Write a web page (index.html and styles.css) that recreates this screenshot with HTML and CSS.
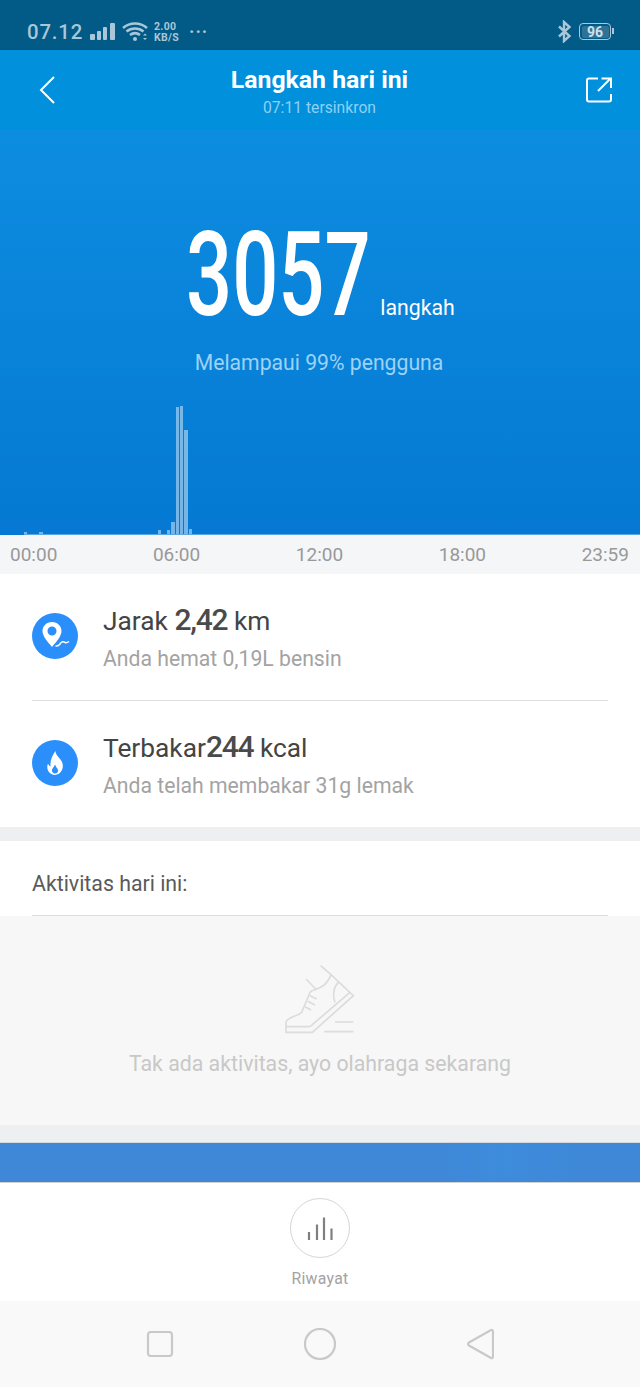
FILE: index.html
```html
<!DOCTYPE html>
<html lang="en">
<head>
    <meta charset="UTF-8">
    <meta name="viewport" content="width=device-width, initial-scale=1.0">
    <title>Langkah hari ini</title>
    <link rel="stylesheet" href="styles.css">
</head>
<body>
    <div class="status-bar">
        <div class="status-left">
            <span class="clock">07.12</span>
            <svg class="signal" width="27" height="17" viewBox="0 0 27 17"><rect x="0" y="11" width="5" height="6" rx="1"/><rect x="7" y="8" width="4" height="9" rx="1"/><rect x="13" y="4" width="4" height="13" rx="1"/><rect x="20" y="0" width="5" height="17" rx="1"/></svg>
            <svg class="wifi" width="26" height="20" viewBox="0 0 26 20"><path d="M1 6 C8 0 18 0 25 6" /><path d="M4.500 9.500 C9.500 5.500 16.500 5.500 21.500 9.500"/><path d="M8 13 C11 10.800 15 10.800 18 13"/><circle class="fill" cx="13" cy="17" r="2"/><path class="fill" d="M21 13.500 L23 11.500 L25 13.500 Z M21 16 L23 18 L25 16 Z"/></svg>
            <div class="speed"><span>2.00</span><span>KB/S</span></div>
            <span class="dots">&middot;&middot;&middot;</span>
        </div>
        <div class="status-right">
            <svg class="bt" width="15" height="23" viewBox="0 0 15 23"><path d="M2 6.500 L12.500 16 L7 21 L7 2 L12.500 7 L2 16.500"/></svg>
            <div class="battery"><span class="battery-level">96</span></div>
        </div>
    </div>

    <div class="nav">
        <svg class="nav-icon" width="18" height="28" viewBox="0 0 18 28"><path d="M15 1 L2 14 L15 27"/></svg>
        <div class="nav-title">
            <h1>Langkah hari ini</h1>
            <p>07:11 tersinkron</p>
        </div>
        <svg class="nav-icon" width="26" height="26" viewBox="0 0 26 26"><path d="M12 1.500 H3 Q1 1.500 1 3.500 V22.500 Q1 24.500 3 24.500 H23 Q25 24.500 25 22.500 V17"/><path d="M12 14 L24 2 M15.500 1.500 H25 V11"/></svg>
    </div>

    <div class="hero">
        <div class="count">
            <span class="count-box"><span class="count-num">3057</span></span>
            <span class="count-unit">langkah</span>
        </div>
        <p class="rank">Melampaui 99% pengguna</p>
        <div class="chart">
            <span class="bar" style="height:2px"></span>
            <span class="chart-gap"></span>
            <span class="bar" style="height:2px"></span>
            <span class="chart-space"></span>
            <span class="bar" style="height:4px"></span>
            <span class="bar" style="height:0"></span>
            <span class="bar" style="height:4px"></span>
            <span class="bar" style="height:12px"></span>
            <span class="bar" style="height:127px"></span>
            <span class="bar" style="height:128px"></span>
            <span class="bar" style="height:104px"></span>
            <span class="bar" style="height:5px"></span>
        </div>
    </div>

    <div class="axis">
        <span>00:00</span><span>06:00</span><span>12:00</span><span>18:00</span><span>23:59</span>
    </div>

    <div class="stats">
        <div class="stat stat-first">
            <div class="stat-icon">
                <svg width="32" height="32" viewBox="0 0 32 32"><path class="solid" fill-rule="evenodd" d="M13 2 C7.500 2 3.500 6 3.500 11 C3.500 16.500 9 22 13 27 C17 22 22.500 16.500 22.500 11 C22.500 6 18.500 2 13 2 Z M13 6.500 A4.500 4.500 0 1 1 13 15.500 A4.500 4.500 0 1 1 13 6.500 Z"/><path class="line" d="M16.500 26 C19 26.500 20 25.500 21 24 C22 22 24 21 26 22.500 C27.500 23 28.500 22.500 30 21.500"/></svg>
            </div>
            <div>
                <div class="stat-main">Jarak <b>2,42</b> km</div>
                <div class="stat-sub">Anda hemat 0,19L bensin</div>
            </div>
        </div>
        <div class="stat">
            <div class="stat-icon">
                <svg width="32" height="32" viewBox="0 0 32 32"><path class="solid" fill-rule="evenodd" d="M16.500 4 C17 9 20.500 10.500 22.500 14 C25.500 19 23.500 27 16 28 C9 27.500 7 21 9 16.500 C9.500 18 10.500 19 11.500 19.500 C11 14 13 8.500 16.500 4 Z M16 17.500 C15 20.500 12.500 21.500 13 24 C13.500 26 15 26.500 16 26.500 C18 26.500 19.500 25 19 23 C18.500 21 17 20.500 16 17.500 Z"/></svg>
            </div>
            <div>
                <div class="stat-main">Terbakar<b>244</b> kcal</div>
                <div class="stat-sub">Anda telah membakar 31g lemak</div>
            </div>
        </div>
    </div>

    <div class="activity">
        <div class="activity-head"><span>Aktivitas hari ini:</span></div>
    </div>
    <div class="empty">
        <svg class="shoe" width="70" height="68" viewBox="130 43 210 204"><path d="M237 45 L268 72 L335 135 L212 245 H133 V215 C133 200 170 197 180 185 L205 125 C215 112 250 120 268 72"/><path d="M133 228 H200 Q207 228 212 222 L325 125"/><path d="M193 85 L225 118"/><path d="M205 135 L225 145 M198 152 L220 163 M190 168 L208 178"/><path d="M290 95 C275 110 272 135 280 155"/><path d="M280 214 H335 M248 243 H335"/></svg>
        <p>Tak ada aktivitas, ayo olahraga sekarang</p>
    </div>

    <div class="gap"></div>
    <div class="banner"></div>

    <div class="tabbar">
        <div class="tab-circle">
            <svg width="26" height="24" viewBox="0 0 26 24"><path d="M2 24 V16 M10 24 V8.500 M17 24 V1.500 M24.500 24 V12.500"/></svg>
        </div>
        <span>Riwayat</span>
    </div>

    <div class="softkeys">
        <svg width="28" height="28" viewBox="0 0 28 28"><rect x="2" y="2" width="24" height="24" rx="3"/></svg>
        <svg width="32" height="32" viewBox="0 0 32 32"><circle cx="16" cy="16" r="15"/></svg>
        <svg width="28" height="32" viewBox="0 0 28 32"><path d="M25 2 Q27 1.500 27 4 V28 Q27 31 25 30 L3 17.500 Q1 16 3 14.500 Z"/></svg>
    </div>
</body>
</html>
```

FILE: styles.css
```css
body {
    font-family: Roboto, "Liberation Sans", sans-serif;
    margin: 0;
    padding: 0;
    background: white;
    width: 640px;
}
p, h1 {
    margin: 0;
}
.status-bar {
    background: #025a86;
    border-bottom: 1px solid #02537d;
    color: #a9c7d8;
    display: flex;
    justify-content: space-between;
    align-items: center;
    padding: 14px 29px 0 27px;
    height: 35px;
}
.status-left, .status-right {
    display: flex;
    align-items: center;
}
.clock {
    font-size: 20.400px;
    font-weight: 500;
    letter-spacing: 0.8px;
    margin-right: 7px;
}
.signal {
    fill: #a9c7d8;
    margin-right: 5px;
}
.wifi {
    fill: none;
    stroke: #a9c7d8;
    stroke-width: 2.6;
    margin-right: 6px;
}
.wifi .fill {
    fill: #a9c7d8;
    stroke: none;
}
.speed {
    display: flex;
    flex-direction: column;
    font-size: 10.500px;
    font-weight: 700;
    line-height: 11px;
    margin-right: 10px;
    letter-spacing: 0.3px;
}
.dots {
    font-size: 18px;
    font-weight: 700;
    letter-spacing: 1px;
    line-height: 20px;
}
.bt {
    fill: none;
    stroke: #a9c7d8;
    stroke-width: 2.4;
    margin-right: 7px;
}
.battery {
    width: 27px;
    height: 12px;
    border: 1.500px solid #a9c7d8;
    border-radius: 4px;
    padding: 1.500px;
    position: relative;
    display: flex;
}
.battery::after {
    content: "";
    position: absolute;
    right: -3.500px;
    top: 4px;
    width: 2px;
    height: 6px;
    background: #a9c7d8;
}
.battery-level {
    flex: 1;
    background: #2f7297;
    border-radius: 2px;
    color: #cfe0ea;
    font-size: 14px;
    font-weight: 700;
    text-align: center;
    line-height: 13px;
}
.nav {
    height: 80px;
    background: #0090dc;
    display: flex;
    justify-content: space-between;
    align-items: center;
    padding: 0 28px 0 39px;
}
.nav-icon {
    fill: none;
    stroke: white;
    stroke-width: 2;
}
.nav-title {
    text-align: center;
    color: white;
    padding-top: 6px;
    margin-right: 4px;
}
.nav-title h1 {
    font-size: 24.800px;
    font-weight: 700;
    line-height: 30px;
}
.nav-title p {
    font-size: 15.700px;
    line-height: 26px;
    color: #8ed0f3;
}
.hero {
    height: 405px;
    background: linear-gradient(#0d8de0, #0579d3);
    box-sizing: border-box;
    padding-top: 86px;
    display: flex;
    flex-direction: column;
    align-items: center;
    color: white;
    position: relative;
}
.count {
    display: flex;
    align-items: baseline;
    margin-left: 1px;
    height: 118px;
}
.count-box {
    width: 183px;
    margin-right: 11px;
    line-height: 118px;
}
.count-num {
    display: inline-block;
    font-size: 116px;
    font-weight: 500;
    transform: scaleX(0.7);
    transform-origin: left center;
}
.count-unit {
    font-size: 21.300px;
}
.rank {
    font-size: 21.200px;
    line-height: 24px;
    color: #9dd2f5;
    margin: 17px 2px 0 0;
}
.chart {
    position: absolute;
    left: 24px;
    right: 0;
    bottom: 0;
    height: 130px;
    display: flex;
    align-items: flex-end;
    gap: 1px;
    border-bottom: 1px solid #5aa9e6;
}
.bar {
    width: 3.450px;
    background: rgba(255,255,255,0.45);
}
.chart-gap {
    width: 9.900px;
}
.chart-space {
    width: 113px;
}
.axis {
    height: 39px;
    background: #f5f6f8;
    display: flex;
    justify-content: space-between;
    align-items: center;
    padding: 0 11px 0 10px;
    font-size: 19px;
    color: #999;
}
.stats {
    height: 253px;
    padding: 0 32px;
}
.stat {
    height: 126px;
    display: flex;
    align-items: center;
    gap: 25px;
    box-sizing: border-box;
}
.stat-first {
    height: 127px;
    border-bottom: 1px solid #dedede;
}
.stat-icon {
    width: 46px;
    height: 46px;
    border-radius: 50%;
    background: #2b8ffb;
    display: flex;
    align-items: center;
    justify-content: center;
    margin-bottom: 2px;
}
.solid {
    fill: white;
}
.line {
    fill: none;
    stroke: white;
    stroke-width: 1.500;
}
.stat-main {
    font-size: 26.300px;
    line-height: 36px;
    color: #444;
}
.stat-main b {
    font-size: 30px;
    font-weight: 500;
    letter-spacing: -1.200px;
    color: #4a4a4a;
}
.stat-sub {
    font-size: 21.200px;
    line-height: 28px;
    color: #a3a3a3;
    margin-top: 6px;
}
.activity {
    border-top: 14px solid #eeeff1;
    padding: 0 32px;
}
.activity-head {
    height: 75px;
    border-bottom: 1px solid #dedede;
    display: flex;
    align-items: center;
    font-size: 21.300px;
    color: #5a5a5a;
    padding-top: 10px;
    box-sizing: border-box;
}
.empty {
    height: 209px;
    background: #f7f7f7;
    display: flex;
    flex-direction: column;
    align-items: center;
    color: #c8c8c8;
    font-size: 21.300px;
}
.shoe {
    fill: none;
    stroke: #dcdcdc;
    stroke-width: 5;
    margin-top: 49px;
    overflow: visible;
}
.empty p {
    margin-top: 19px;
    line-height: 24px;
}
.gap {
    height: 18px;
    background: #eeeff1;
    border-bottom: 1px solid #d4d9df;
    box-sizing: border-box;
}
.banner {
    height: 39px;
    background: linear-gradient(90deg, #3f88d8 70%, #3d8cdb 78%, #3f88d8 90%);
}
.tabbar {
    height: 119px;
    display: flex;
    flex-direction: column;
    align-items: center;
    box-sizing: border-box;
    padding-top: 15px;
    border-top: 1px solid #d2d2d2;
    font-size: 15.800px;
    color: #a3a3a3;
    letter-spacing: 0.3px;
}
.tab-circle {
    width: 60px;
    height: 60px;
    box-sizing: border-box;
    border: 1px solid #d5d5d5;
    border-radius: 50%;
    display: flex;
    align-items: center;
    justify-content: center;
    margin-bottom: 11px;
}
.tab-circle svg {
    fill: none;
    stroke: #808080;
    stroke-width: 2.200;
}
.softkeys {
    height: 86px;
    background: #f9f9f9;
    display: flex;
    justify-content: space-between;
    align-items: center;
    padding: 0 146px;
}
.softkeys svg {
    fill: none;
    stroke: #c9c9c9;
    stroke-width: 2.200;
}
```
